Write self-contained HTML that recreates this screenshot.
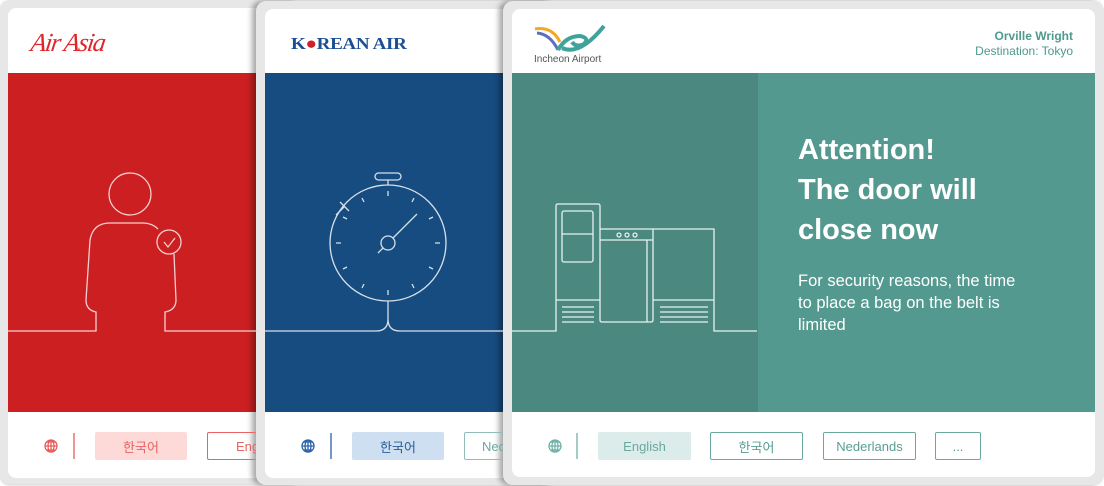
<!DOCTYPE html>
<html><head><meta charset="utf-8"><style>
*{margin:0;padding:0;box-sizing:border-box}
body{width:1104px;height:486px;background:#fff;position:relative;overflow:hidden;font-family:"Liberation Sans","Noto Sans CJK KR",sans-serif}
.card{position:absolute;background:#e7e7e7;border-radius:10px;}
.in{position:absolute;background:#fff;border-radius:8px;overflow:hidden}
.abs{position:absolute}
.btn{position:absolute;height:28px;top:432px;border-radius:2px;font-size:13px;display:flex;align-items:center;justify-content:center}
</style></head><body>
<!-- card1 -->
<div class="card" style="left:0;top:0;width:300px;height:484px;box-shadow:0 1px 3px rgba(0,0,0,.2)"></div>
<div class="in" style="left:8px;top:8px;width:290px;height:470px">
 <div class="abs" style="left:0;top:65px;width:290px;height:339px;background:#cc1f22"></div>
 <div class="abs" style="left:23px;top:20px;font:italic 26px 'Liberation Serif',serif;color:#e0262a;letter-spacing:-1.5px;transform:skewX(-8deg)">Air Asia</div>
</div>
<!-- card2 -->
<div class="card" style="left:256px;top:1px;width:300px;height:484px;box-shadow:-4px 0 6px rgba(0,0,0,.35)"></div>
<div class="in" style="left:265px;top:9px;width:290px;height:469px">
 <div class="abs" style="left:0;top:64px;width:290px;height:339px;background:#174c80"></div>
 <div class="abs" style="left:26px;top:25px;font:bold 17px 'Liberation Serif',serif;color:#1a4f94;letter-spacing:-0.3px;transform:scaleX(1.12);transform-origin:left">K<span style="color:#d0202a">●</span>REAN AIR</div>
</div>
<!-- card3 -->
<div class="card" style="left:503px;top:1px;width:601px;height:484px;box-shadow:-4px 0 6px rgba(0,0,0,.35)"></div>
<div class="in" style="left:512px;top:9px;width:583px;height:468px">
 <div class="abs" style="left:0;top:64px;width:246px;height:339px;background:#4a8880"></div>
 <div class="abs" style="left:246px;top:64px;width:337px;height:339px;background:#53998f"></div>
 <div class="abs" style="left:22px;top:45px;font-size:10px;color:#555">Incheon Airport</div>
 <div class="abs" style="right:22px;top:20px;text-align:right;color:#4d9a90;font-size:12px;line-height:15px"><b>Orville Wright</b><br>Destination: Tokyo</div>
 <div class="abs" style="left:286px;top:121px;color:#fff;font-size:29px;font-weight:bold;line-height:40px">Attention!<br>The door will<br>close now</div>
 <div class="abs" style="left:286px;top:261px;color:#fff;font-size:16.5px;line-height:22px;width:232px">For security reasons, the time to place a bag on the belt is limited</div>
</div>
<svg class="abs" style="left:0;top:0" width="1104" height="486" fill="none" stroke="#fff" stroke-width="1.3">
 <path d="M535 29 Q552 26 560 42" stroke="#f5a623" stroke-width="3"/>
 <path d="M537 33 Q550 34 558 50" stroke="#5b6fc0" stroke-width="3"/>
 <path d="M558 50 Q566 36 580 36 Q590 38 584 44 Q576 48 572 42 M562 48 Q580 56 604 26" stroke="#3fa39a" stroke-width="4"/>
 <g stroke="#f4d0d0">
 <circle cx="130" cy="194" r="21"/>
 <path d="M8 331H96V312Q86 310 86 300L90 240Q93 223 110 223H143Q152 223 158 229"/>
 <path d="M174 254L176 300Q176 310 165 312V331H258"/>
 <circle cx="169" cy="242" r="12"/>
 <path d="M164 242l4 5 7-9"/>
 </g>
 <g stroke="#d6e0ec">
 <circle cx="388" cy="243" r="58"/>
 <rect x="375" y="173" width="26" height="7" rx="3.5"/>
 <path d="M388 180v5M345 206l-9 9M340 202l9 9"/>
 <circle cx="388" cy="243" r="7"/>
 <path d="M393 238L417 214M383 248l-5 5"/>
 <path d="M388 191v5M388 290v5M336 243h5M435 243h5M362 198l2 4M414 198l-2 4M362 288l2-4M414 288l-2-4M343 217l4 2M433 217l-4 2M343 269l4-2M433 269l-4-2"/>
 <path d="M265 331H376Q388 331 388 319V301V319Q388 331 400 331H503"/>
 </g>
 <g stroke="#e6f1ef">
 <path d="M512 331H556V206Q556 204 558 204H598Q600 204 600 206V300H556M600 229H714V300H653M600 240H653M647 240V322M653 229V320Q653 322 651 322H602Q600 322 600 320V300M714 300V331H757"/>
 <rect x="562" y="211" width="31" height="51" rx="2"/>
 <path d="M562 234h31M562 307h32M562 312h32M562 317h32M562 322h32M660 307h48M660 312h48M660 317h48M660 322h48"/>
 <circle cx="619" cy="235" r="2"/><circle cx="627" cy="235" r="2"/><circle cx="635" cy="235" r="2"/>
 </g>
 <g stroke="#e75c5c"><circle cx="51" cy="446" r="6"/><path d="M45 446h12M51 440v12M47 442h8M47 450h8"/><ellipse cx="51" cy="446" rx="3" ry="6"/><path d="M74 433v26"/></g>
 <g stroke="#2a62a8"><circle cx="308" cy="446" r="6"/><path d="M302 446h12M308 440v12M304 442h8M304 450h8"/><ellipse cx="308" cy="446" rx="3" ry="6"/><path d="M331 433v26"/></g>
 <g stroke="#6fb0a8"><circle cx="555" cy="446" r="6"/><path d="M549 446h12M555 440v12M551 442h8M551 450h8"/><ellipse cx="555" cy="446" rx="3" ry="6"/><path d="M577 433v26"/></g>
</svg>
<div class="btn" style="left:95px;width:92px;background:#fdd9d8;color:#e46464">한국어</div>
<div class="btn" style="left:207px;width:49px;border:1.5px solid #ea6262;border-right:none;color:#e46464;justify-content:flex-start;padding-left:28px;overflow:hidden">Engl</div>
<div class="btn" style="left:352px;width:92px;background:#cddff0;color:#2a5b9a">한국어</div>
<div class="btn" style="left:464px;width:39px;border:1.5px solid #8fbdb8;border-right:none;color:#6aa8a0;justify-content:flex-start;padding-left:17px;overflow:hidden">Nede</div>
<div class="btn" style="left:598px;width:93px;background:#dcecea;color:#6aa8a0">English</div>
<div class="btn" style="left:710px;width:93px;border:1.5px solid #6aa8a0;color:#5a9d95">한국어</div>
<div class="btn" style="left:823px;width:93px;border:1.5px solid #6aa8a0;color:#5a9d95">Nederlands</div>
<div class="btn" style="left:935px;width:46px;border:1.5px solid #6aa8a0;color:#5a9d95">...</div>
</body></html>
